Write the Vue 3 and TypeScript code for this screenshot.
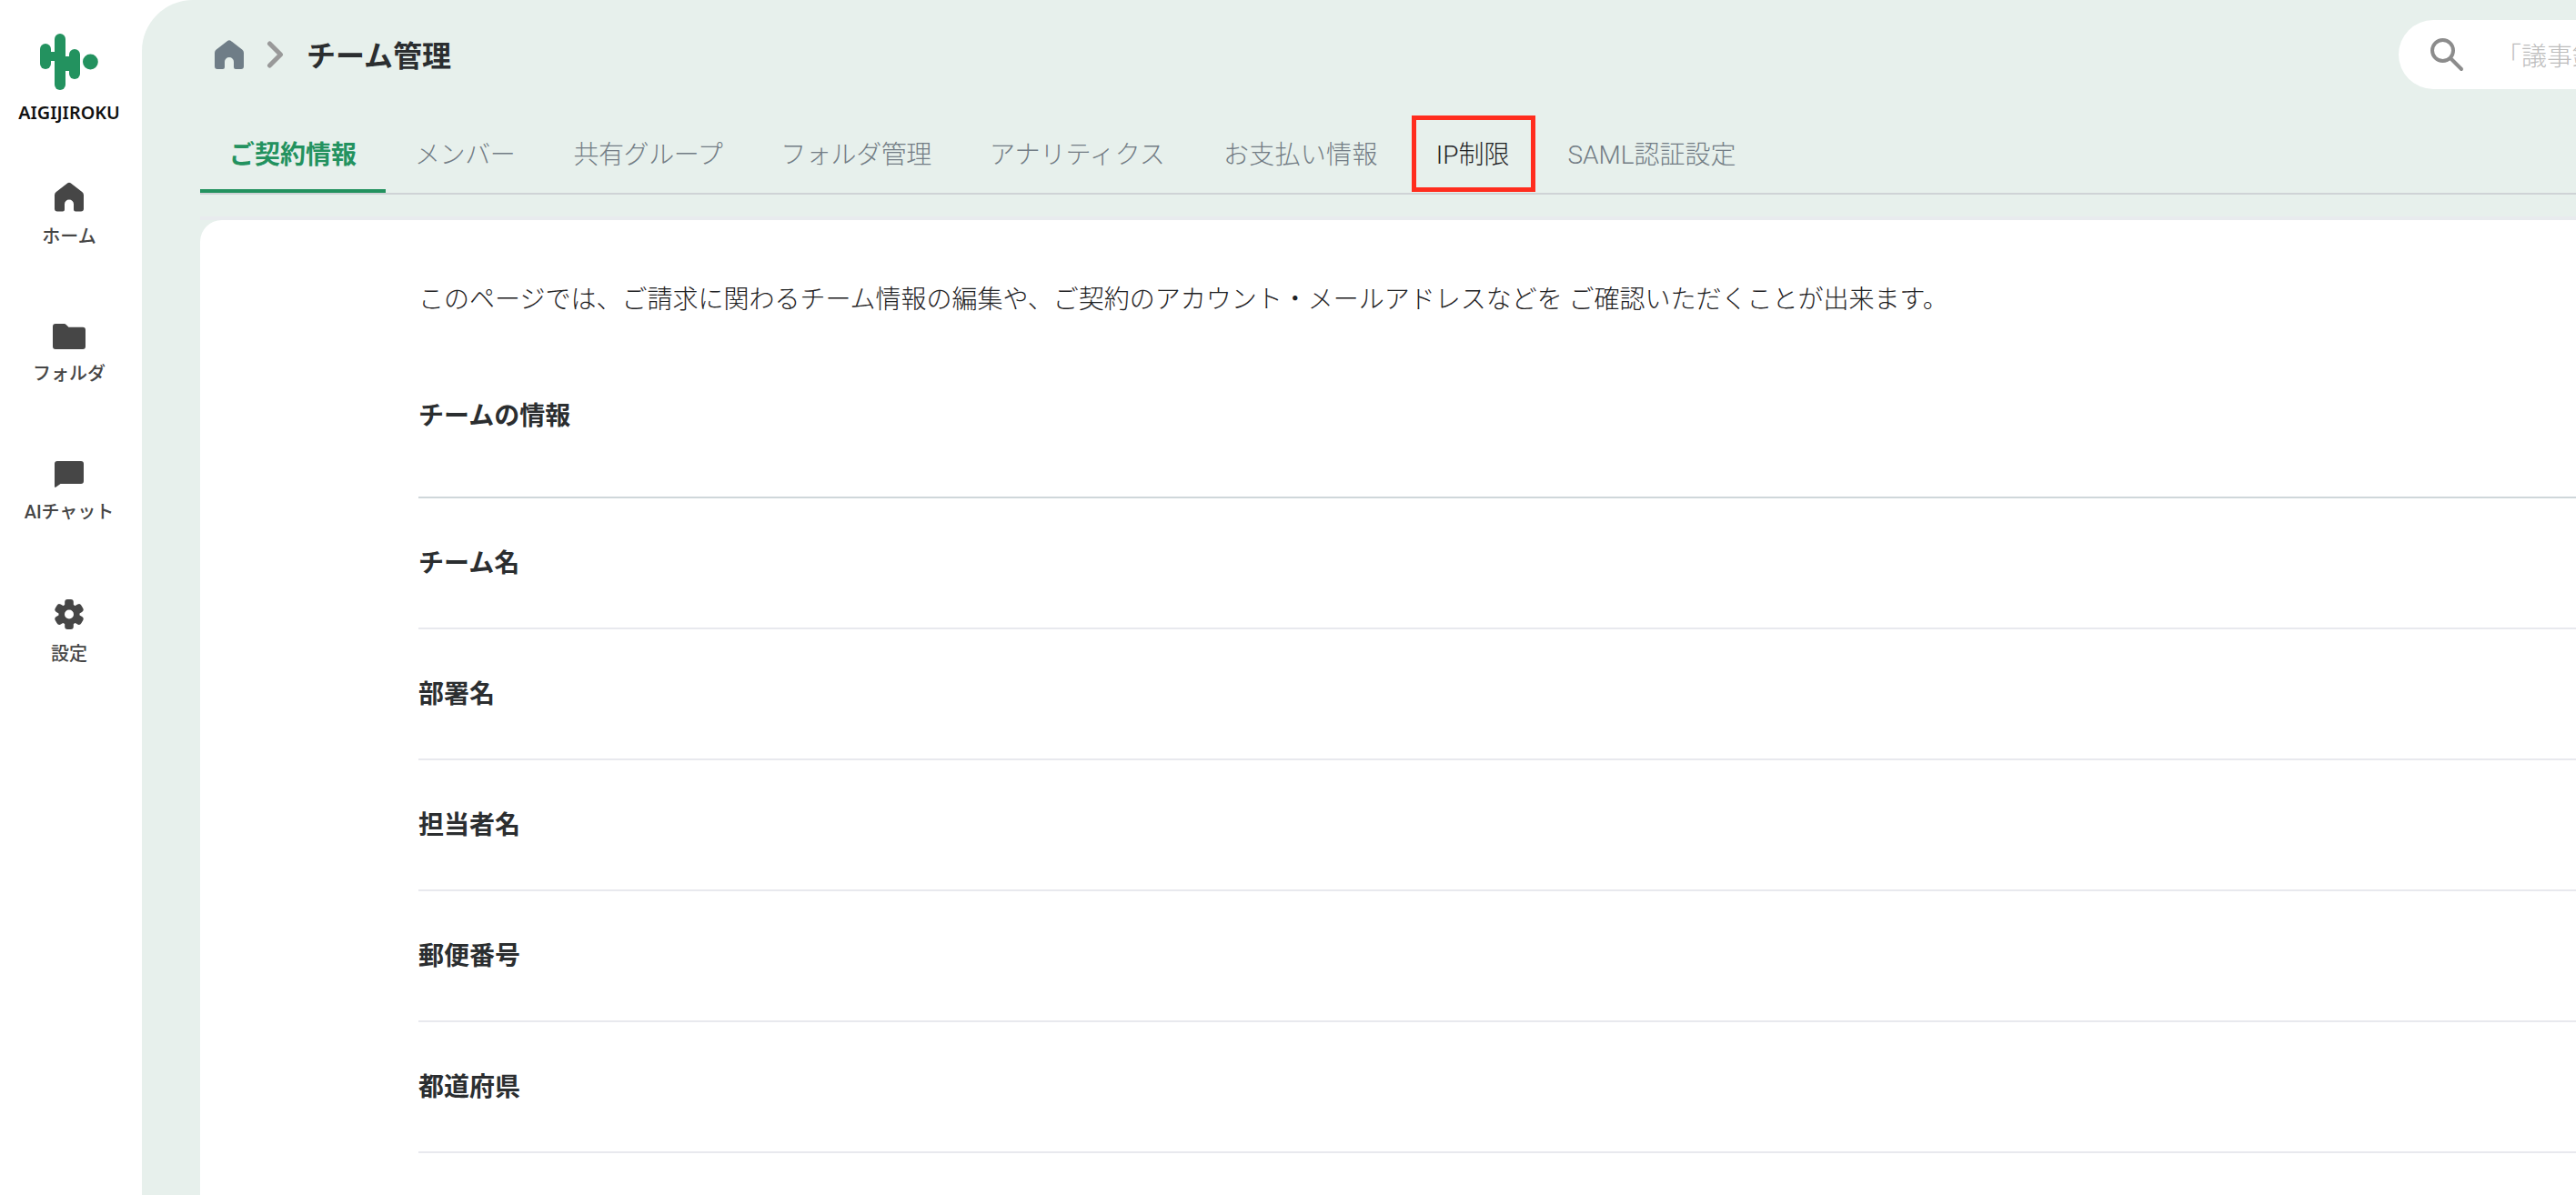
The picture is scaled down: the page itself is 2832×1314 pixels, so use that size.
<script setup lang="ts">
interface Tab { label: string; fit?: 'tight' | 'loose' }
const tabs: Tab[] = [
  { label: 'ご契約情報' },
  { label: 'メンバー', fit: 'tight' },
  { label: '共有グループ', fit: 'tight' },
  { label: 'フォルダ管理', fit: 'tight' },
  { label: 'アナリティクス' },
  { label: 'お支払い情報', fit: 'loose' },
  { label: 'IP制限' },
  { label: 'SAML認証設定' },
]
const rows: string[] = ['チーム名', '部署名', '担当者名', '郵便番号', '都道府県']
const homePath = 'M14.4 .8a2.6 2.6 0 0 1 3.2 0l12.6 9.6a4.4 4.4 0 0 1 1.8 3.5V29a3 3 0 0 1-3 3H23a2 2 0 0 1-2-2v-6a4.9 4.9 0 0 0-10 0v6a2 2 0 0 1-2 2H3a3 3 0 0 1-3-3V13.9a4.4 4.4 0 0 1 1.8-3.5z'
</script>

<template>
  <div class="page">
    <aside class="sidebar">
      <svg class="logo" width="64" height="62" viewBox="44 37 64 62" fill="#23925f">
        <rect x="44" y="48" width="12" height="28" rx="6" />
        <rect x="60" y="37" width="12" height="62" rx="6" />
        <rect x="76" y="54" width="12" height="33" rx="6" />
        <rect x="55" y="57" width="6" height="10" />
        <rect x="71" y="62" width="6" height="16" />
        <circle cx="99.4" cy="68" r="8.4" />
      </svg>
      <div class="logo-text">AIGIJIROKU</div>
      <nav class="nav">
        <a class="nav-item">
          <svg width="32" height="33" viewBox="0 0 32 32" fill="#464646"><path :d="homePath" /></svg>
          <span>ホーム</span>
        </a>
        <a class="nav-item">
          <svg width="36" height="28" viewBox="0 0 36 28" fill="#464646">
            <path d="M3 0h9.5a3 3 0 0 1 2.2.9L17.5 3.8H33a3 3 0 0 1 3 3V25a3 3 0 0 1-3 3H3a3 3 0 0 1-3-3V3a3 3 0 0 1 3-3z" />
          </svg>
          <span>フォルダ</span>
        </a>
        <a class="nav-item">
          <svg width="32" height="29" viewBox="0 0 32 29" fill="#464646">
            <path d="M3 0h26a3 3 0 0 1 3 3v19a3 3 0 0 1-3 3H6.5L1.6 28.6A1 1 0 0 1 0 28V3a3 3 0 0 1 3-3z" />
          </svg>
          <span>AIチャット</span>
        </a>
        <a class="nav-item">
          <svg width="32" height="33" viewBox="0 0 32 33" fill="#464646">
            <circle cx="16" cy="16.5" r="11.5" />
            <rect x="11.2" y="0" width="9.6" height="33" rx="3" />
            <rect x="11.2" y="0" width="9.6" height="33" rx="3" transform="rotate(60 16 16.5)" />
            <rect x="11.2" y="0" width="9.6" height="33" rx="3" transform="rotate(120 16 16.5)" />
            <circle cx="16" cy="16.5" r="5" fill="#fff" />
          </svg>
          <span>設定</span>
        </a>
      </nav>
    </aside>

    <main class="main">
      <header class="header">
        <svg class="crumb-icon" width="32" height="34" viewBox="0 0 32 32" fill="#6f7d87"><path :d="homePath" /></svg>
        <svg class="chevron" width="20" height="30" viewBox="0 0 20 30" fill="none" stroke="#999" stroke-width="5" stroke-linecap="round" stroke-linejoin="round">
          <path d="M3.5 3 15.5 15 3.5 27" />
        </svg>
        <h1 class="title">チーム管理</h1>
        <div class="search">
          <svg class="search-icon" width="38" height="38" viewBox="0 0 38 38" fill="none" stroke="#8c8c8c" stroke-width="4" stroke-linecap="round">
            <circle cx="14.5" cy="14.5" r="11.5" />
            <path d="M23 23 35 35" />
          </svg>
          <span class="placeholder">「議事録」を検索</span>
        </div>
      </header>

      <div class="tabs">
        <div
          v-for="(tab, i) in tabs"
          :key="tab.label"
          class="tab"
          :class="[tab.fit, { active: i === 0, marked: i === 6 }]"
        >
          {{ tab.label }}
        </div>
      </div>

      <div class="strip"></div>
      <section class="card">
        <p class="desc">このページでは、ご請求に関わるチーム情報の編集や、ご契約のアカウント・メールアドレスなどを ご確認いただくことが出来ます。</p>
        <h2 class="section">チームの情報</h2>
        <div v-for="row in rows" :key="row" class="row">{{ row }}</div>
      </section>
    </main>
  </div>
</template>

<style>
html, body { margin: 0; padding: 0; background: #fff; overflow: hidden; }
</style>

<style scoped>
.page {
  display: flex;
  width: 2832px;
  height: 1314px;
  overflow: hidden;
  background: #fff;
  font-family: Roboto, "Noto Sans CJK JP", sans-serif;
  color: #2b2e30;
}
.sidebar {
  width: 156px;
  flex: none;
  display: flex;
  flex-direction: column;
  align-items: center;
  padding: 37px 4px 0 0;
  box-sizing: border-box;
}
.logo-text {
  margin-top: 13px;
  font-family: "Noto Sans", sans-serif;
  font-size: 19.8px;
  line-height: 24px;
  font-weight: 600;
  color: #111;
}
.nav {
  margin-top: 64px;
  display: flex;
  flex-direction: column;
  align-items: center;
  gap: 84px;
}
.nav-item {
  display: flex;
  flex-direction: column;
  align-items: center;
  gap: 15px;
  font-size: 20px;
  line-height: 24px;
  font-weight: 500;
  color: #464646;
}
.main {
  flex: 1;
  min-width: 0;
  display: flex;
  flex-direction: column;
  background: #e7f0ec;
  border-top-left-radius: 56px;
  overflow: hidden;
}
.header {
  height: 120px;
  flex: none;
  display: flex;
  align-items: center;
  padding-left: 80px;
}
.crumb-icon { flex: none; }
.chevron { flex: none; margin-left: 25px; }
.title {
  margin: 4px 0 0 24px;
  font-size: 32px;
  line-height: 44px;
  font-weight: 700;
}
.search {
  margin-left: auto;
  width: 195px;
  height: 76px;
  flex: none;
  box-sizing: border-box;
  display: flex;
  align-items: center;
  padding-left: 34px;
  background: #fff;
  border-radius: 38px 0 0 38px;
  overflow: hidden;
  white-space: nowrap;
}
.search-icon { flex: none; }
.placeholder {
  margin-left: 35px;
  flex: none;
  font-size: 28px;
  font-weight: 300;
  color: #bdbdbd;
}
.tabs {
  margin-left: 64px;
  height: 94px;
  flex: none;
  box-sizing: border-box;
  display: flex;
  border-bottom: 2px solid #cfd3d6;
}
.tab {
  position: relative;
  box-sizing: border-box;
  height: 92px;
  padding: 8px 32px 0;
  display: flex;
  align-items: center;
  border-bottom: 4px solid transparent;
  font-size: 28px;
  font-weight: 300;
  color: #737d85;
  white-space: nowrap;
}
.tab.tight { letter-spacing: -0.4px; }
.tab.loose { letter-spacing: 0.3px; }
.tab.active {
  border-bottom-color: #23925f;
  color: #23925f;
  font-weight: 700;
}
.tab.marked { color: #1f2224; }
.tab.marked::after {
  content: "";
  position: absolute;
  left: 5px;
  right: 3px;
  top: 7px;
  bottom: -3px;
  border: 5px solid #ff2d1e;
}
.strip {
  margin: 24px 0 0 64px;
  height: 4px;
  flex: none;
  background: #e8ebee;
}
.card {
  margin-left: 64px;
  flex: 1;
  background: #fff;
  border-top-left-radius: 24px;
  padding: 68px 0 0 240px;
}
.desc {
  margin: 0;
  font-size: 28px;
  line-height: 40px;
  font-weight: 300;
  color: #1f2224;
  white-space: nowrap;
}
.section {
  margin: 88px 0 0;
  padding-bottom: 68px;
  border-bottom: 2px solid #cfd7da;
  font-size: 28px;
  line-height: 40px;
  font-weight: 700;
}
.row {
  box-sizing: border-box;
  height: 144px;
  display: flex;
  align-items: center;
  padding-bottom: 4px;
  border-bottom: 2px solid #e8e9ee;
  font-size: 28px;
  font-weight: 700;
}
</style>
